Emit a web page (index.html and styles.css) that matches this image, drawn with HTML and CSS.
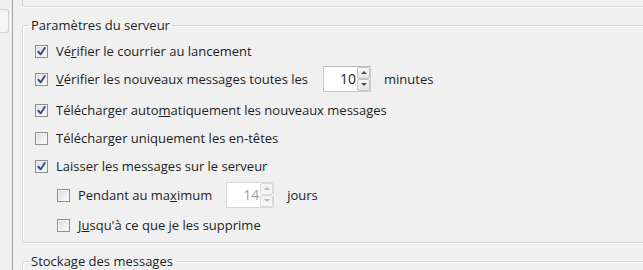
FILE: index.html
```html
<!DOCTYPE html>
<html lang="fr">
<head>
    <meta charset="UTF-8">
    <title>Paramètres du serveur</title>
    <link rel="stylesheet" href="styles.css">
</head>
<body>
    <div class="window">
        <div class="rail"><div class="tab"></div></div>
        <div class="pane">
            <div class="prev-group"></div>
            <fieldset class="group">
                <legend>Paramètres du serveur</legend>
                <label class="row">
                    <span class="cb on"><svg viewBox="0 0 9 9"><path d="M1.3 4.6 L3.6 7.4 L7.8 0.9" /></svg></span>
                    <span>Vé<u>r</u>ifier le courrier au lancement</span>
                </label>
                <label class="row gap-after">
                    <span class="cb on"><svg viewBox="0 0 9 9"><path d="M1.3 4.6 L3.6 7.4 L7.8 0.9" /></svg></span>
                    <span class="txt-check"><u>V</u>érifier les nouveaux messages toutes les</span>
                    <span class="spin spin-check">
                        <span class="spin-val">10</span>
                        <span class="spin-btns"><span class="up"></span><span class="down"></span></span>
                    </span>
                    <span class="unit">minutes</span>
                </label>
                <label class="row">
                    <span class="cb on"><svg viewBox="0 0 9 9"><path d="M1.3 4.6 L3.6 7.4 L7.8 0.9" /></svg></span>
                    <span>Télécharger auto<u>m</u>atiquement les nouveaux messages</span>
                </label>
                <label class="row">
                    <span class="cb"></span>
                    <span>Téléchar<u>g</u>er uniquement les en-têtes</span>
                </label>
                <label class="row">
                    <span class="cb on"><svg viewBox="0 0 9 9"><path d="M1.3 4.6 L3.6 7.4 L7.8 0.9" /></svg></span>
                    <span>Laisser les messa<u>g</u>es sur le serveur</span>
                </label>
                <label class="row sub">
                    <span class="cb"></span>
                    <span class="txt-days">Pendant au ma<u>x</u>imum</span>
                    <span class="spin spin-days disabled">
                        <span class="spin-val">14</span>
                        <span class="spin-btns"><span class="up"></span><span class="down"></span></span>
                    </span>
                    <span class="unit">jours</span>
                </label>
                <label class="row sub">
                    <span class="cb"></span>
                    <span>J<u>u</u>squ'à ce que je les supprime</span>
                </label>
            </fieldset>
            <fieldset class="group">
                <legend>Stockage des messages</legend>
            </fieldset>
        </div>
    </div>
</body>
</html>
```

FILE: styles.css
```css
body, html { margin: 0; padding: 0; background-color: #f0f0f0; font-family: "Open Sans", "Noto Sans", sans-serif; font-size: 13px; color: #1e1e1e; overflow: hidden; }
.window { display: flex; height: 270px; }
.rail { width: 12px; flex: none; border-right: 1px solid #a3a3a3; }
.tab { margin-top: 9px; width: 9px; height: 24px; box-sizing: border-box; border: 1px solid #d2d2d2; border-left: none; border-radius: 0 3px 3px 0; background-color: #f6f6f6; }
.pane { flex: 1; padding-left: 9px; overflow: hidden; }
.prev-group { height: 16px; margin: -10px -6px 0 0; border: 1px solid #d5d5d5; border-top: none; border-radius: 0 0 3px 3px; box-shadow: 0 1px 0 #fff; }
.group { margin: 10px -6px 0 0; padding: 4px 0 2px 6px; min-width: 0; border: 1px solid #d5d5d5; border-radius: 3px; box-shadow: inset 1px 1px 0 #fff, 1px 1px 0 #fff; }
.group legend { padding: 0 2px; line-height: 16px; color: #1e1e1e; }
.row { display: flex; align-items: center; height: 28px; padding-left: 6px; white-space: nowrap; }
.row.gap-after { margin-bottom: 3px; }
.row.sub { height: 30px; padding-left: 28px; }
.cb { flex: none; width: 13px; height: 13px; box-sizing: border-box; margin-right: 8px; border: 1px solid #8e8f8f; background: linear-gradient(135deg, #dcdcdc, #fbfbfb); box-shadow: inset 0 0 0 1px #f4f4f4; display: flex; align-items: center; justify-content: center; }
.cb svg { width: 9px; height: 9px; }
.cb svg path { fill: none; stroke: #2b4589; stroke-width: 1.8; stroke-linecap: round; stroke-linejoin: round; }
.spin { display: flex; width: 48px; height: 26px; box-sizing: border-box; border: 1px solid #c9c9c9; border-top-color: #b9b9b9; background-color: #fff; }
.spin-check { margin-left: 15px; }
.spin-days { margin-left: 14px; }
.spin-val { flex: 1; text-align: right; line-height: 24px; padding-right: 1px; font-size: 14px; }
.spin-btns { display: flex; flex-direction: column; width: 13px; }
.spin-btns span { flex: 1; position: relative; border: 1px solid #c4c4c4; background: linear-gradient(#f7f7f7, #e4e4e4); border-radius: 2px; }
.spin-btns span::after { content: ""; position: absolute; left: 3px; top: 3px; border-left: 3px solid transparent; border-right: 3px solid transparent; }
.spin-btns .up::after { border-bottom: 3px solid #4d4d4d; }
.spin-btns .down::after { border-top: 3px solid #4d4d4d; }
.spin.disabled { border-color: #d9d9d9; }
.spin.disabled .spin-val { color: #a0a0a0; }
.spin.disabled .spin-btns span { border-color: #dadada; background: #f4f4f4; }
.spin.disabled .spin-btns span::after { border-bottom-color: #b4b4b4; border-top-color: #b4b4b4; }
.spin.disabled .spin-btns .up::after { border-top-color: transparent; }
.spin.disabled .spin-btns .down::after { border-bottom-color: transparent; }
.unit { margin-left: 13px; }
```
